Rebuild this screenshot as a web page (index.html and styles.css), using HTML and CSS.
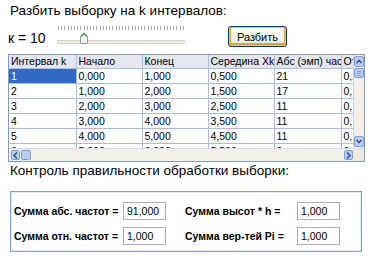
FILE: index.html
```html
<!DOCTYPE html>
<html lang="ru">
<head>
    <meta charset="UTF-8">
    <title>Интервалы</title>
    <link rel="stylesheet" href="styles.css">
</head>
<body>

    <div class="page">
        <h1 class="caption">Разбить выборку на k интервалов:</h1>

        <div class="split-row">
            <span class="k-label">к = 10</span>
            <div class="slider">
                <div class="ticks"></div>
                <div class="track"></div>
                <div class="thumb">
                    <svg width="8" height="12" viewBox="0 0 8 12">
                        <path d="M0.5 11.5 V4.5 L4 0.8 L7.5 4.5 V11.5 Z" fill="#f4f3ee" stroke="#9a9a9a"/>
                        <path d="M1.2 4.6 L4 1.6 L6.8 4.6" fill="none" stroke="#21a121" stroke-width="1.2"/>
                    </svg>
                </div>
            </div>
            <button class="xp-button">Разбить</button>
        </div>

        <div class="grid">
            <div class="grid-body">
                <div class="cells-wrap">
                    <table class="cells">
                        <colgroup>
                            <col class="c-wide"><col class="c-std"><col class="c-std"><col class="c-std"><col class="c-wide"><col class="c-cut">
                        </colgroup>
                        <tr class="head">
                            <th>Интервал k</th><th>Начало</th><th>Конец</th><th>Середина Xk</th><th>Абс (эмп) частота</th><th>От</th>
                        </tr>
                        <tr><td class="selected">1</td><td>0,000</td><td>1,000</td><td>0,500</td><td>21</td><td>0,2</td></tr>
                        <tr><td>2</td><td>1,000</td><td>2,000</td><td>1,500</td><td>17</td><td>0,1</td></tr>
                        <tr><td>3</td><td>2,000</td><td>3,000</td><td>2,500</td><td>11</td><td>0,1</td></tr>
                        <tr><td>4</td><td>3,000</td><td>4,000</td><td>3,500</td><td>11</td><td>0,1</td></tr>
                        <tr><td>5</td><td>4,000</td><td>5,000</td><td>4,500</td><td>11</td><td>0,1</td></tr>
                        <tr><td>6</td><td>5,000</td><td>6,000</td><td>5,500</td><td>9</td><td>0,0</td></tr>
                    </table>
                </div>
                <svg class="vbar" width="11" height="93" viewBox="0 0 11 93">
                    <rect x="0" y="0" width="11" height="93" fill="#f2f0e8"/>
                    <rect x="0" y="0" width="1" height="93" fill="#c4d2ee"/>
                    <rect x="1.5" y="1.5" width="9" height="10" rx="1.5" fill="#b9cdf8" stroke="#7f9ce0"/>
                    <path d="M3.5 8 L6 5.5 L8.5 8" fill="none" stroke="#2f4a80" stroke-width="1.5"/>
                    <rect x="1.5" y="13.5" width="9" height="9" rx="1.5" fill="#b9cdf8" stroke="#7f9ce0"/>
                    <path d="M4 16.5 H8 M4 18.5 H8 M4 20.5 H8" stroke="#7f9ce0"/>
                    <rect x="1.5" y="81.5" width="9" height="10" rx="1.5" fill="#b9cdf8" stroke="#7f9ce0"/>
                    <path d="M3.5 85 L6 87.5 L8.5 85" fill="none" stroke="#2f4a80" stroke-width="1.5"/>
                </svg>
            </div>
            <div class="grid-foot">
                <div class="hscroll">
                    <div class="sb-btn">
                        <svg width="5" height="7" viewBox="0 0 5 7"><path d="M4 0.5 L1 3.5 L4 6.5" fill="none" stroke="#2f4a80" stroke-width="1.5"/></svg>
                    </div>
                    <div class="sb-thumb"></div>
                    <div class="sb-fill"></div>
                    <div class="sb-btn">
                        <svg width="5" height="7" viewBox="0 0 5 7"><path d="M1 0.5 L4 3.5 L1 6.5" fill="none" stroke="#2f4a80" stroke-width="1.5"/></svg>
                    </div>
                </div>
                <div class="corner"></div>
            </div>
        </div>

        <h2 class="caption">Контроль правильности обработки выборки:</h2>

        <div class="check-box">
            <div class="check-grid">
                <span class="check-label">Сумма абс. частот =</span>
                <span class="field">91,000</span>
                <span></span>
                <span class="check-label">Сумма высот * h =</span>
                <span class="field">1,000</span>

                <span class="check-label">Сумма отн. частот =</span>
                <span class="field">1,000</span>
                <span></span>
                <span class="check-label">Сумма вер-тей Pi =</span>
                <span class="field">1,000</span>
            </div>
        </div>
    </div>

</body>
</html>
```

FILE: styles.css
```css
/* General Styles */
* {
    margin: 0;
    padding: 0;
    box-sizing: border-box;
}

body {
    font-family: "Liberation Sans", Arial, sans-serif;
    background-color: #ffffff;
    color: #000000;
}

.page {
    width: 370px;
    height: 266px;
    padding-top: 2px;
    overflow: hidden;
}

.caption {
    font-size: 13.5px;
    font-weight: normal;
    line-height: 18px;
    padding-left: 10px;
}

/* Split row */
.split-row {
    display: flex;
    align-items: flex-start;
    height: 21px;
    margin-top: 6px;
    padding-left: 8px;
}

.k-label {
    font-size: 14px;
    line-height: 18px;
    width: 49px;
    margin-top: 3px;
}

.slider {
    position: relative;
    width: 128px;
    height: 20px;
}

.ticks {
    height: 4px;
    margin-left: 1px;
    background: repeating-linear-gradient(to right, #a8a8a8 0 1px, transparent 1px 3.2px);
}

.track {
    height: 4px;
    margin-top: 10px;
    background: linear-gradient(#e6e3d6, #f3f2ec);
    border: 1px solid #d6d3c6;
    border-radius: 1px;
}

.thumb {
    position: absolute;
    left: 23px;
    top: 6px;
    line-height: 0;
}

.xp-button {
    margin-left: 43px;
    width: 59px;
    height: 21px;
    font-family: "Liberation Sans", Arial, sans-serif;
    font-size: 11px;
    color: #000;
    background: linear-gradient(#fefefd, #f0efe8 80%, #d8d5c8);
    border: 1px solid #003c74;
    border-radius: 3px;
    box-shadow: inset 0 0 0 1px #f5c15a, inset 0 -1px 0 2px #e5a12f;
}

/* Data grid */
.grid {
    margin-top: 7px;
    margin-left: 8px;
    width: 357px;
    height: 108px;
    border: 1px solid #7f9db9;
    overflow: hidden;
}

.grid-body {
    display: flex;
    height: 93px;
}

.cells-wrap {
    width: 344px;
    flex: none;
    overflow: hidden;
}

.vbar {
    display: block;
    flex: none;
}

.cells {
    border-collapse: collapse;
    table-layout: fixed;
    width: 344px;
    font-size: 10.5px;
    line-height: 14px;
}

.c-std {
    width: 66px;
}

.c-wide {
    width: 67px;
}

.c-cut {
    width: 12px;
}

.cells th, .cells td {
    height: 15px;
    padding: 0 0 0 2px;
    text-align: left;
    font-weight: normal;
    white-space: nowrap;
    overflow: hidden;
    border: 1px solid #a7bde8;
    border-top: none;
}

.cells th:first-child, .cells td:first-child {
    border-left: none;
}

.cells th:last-child, .cells td:last-child {
    border-right: none;
}

.cells .head th {
    height: 13px;
    line-height: 12px;
    background-color: #e3e7f0;
    background-image: radial-gradient(#cdd5e6 0.6px, transparent 0.7px);
    background-size: 2px 2px;
}

.cells td.selected {
    background-color: #316ac5;
    color: #ffffff;
}

.grid-foot {
    display: flex;
    height: 13px;
    border-top: 1px solid #d4dcec;
}

.hscroll {
    flex: 1;
    display: flex;
    align-items: center;
    background: #f2f0e8;
    padding-left: 2px;
}

.corner {
    width: 11px;
    background: #ebe8dc;
}

.sb-btn {
    width: 9px;
    height: 10px;
    flex: none;
    display: flex;
    align-items: center;
    justify-content: center;
    background-color: #b9cdf8;
    border: 1px solid #7f9ce0;
    border-radius: 2px;
}

.sb-thumb {
    width: 10px;
    height: 10px;
    margin-left: 1px;
    border: 1px solid #7f9ce0;
    border-radius: 2px;
    background-color: #b9cdf8;
}

.sb-fill {
    flex: 1;
}

/* Check box */
.check-box {
    margin-top: 11px;
    margin-left: 10px;
    width: 352px;
    height: 61px;
    border: 1px solid #7c9fd3;
    box-shadow: inset 0 0 0 1px #e4ecf9;
    padding: 10px 0 0 3px;
}

.check-grid {
    display: grid;
    grid-template-columns: 109px 43px 19px 112px 43px;
    grid-auto-rows: 18px;
    row-gap: 7px;
    align-items: center;
}

.check-label {
    font-size: 10.5px;
    font-weight: bold;
    white-space: nowrap;
}

.field {
    height: 18px;
    border: 1px solid #a9acb0;
    font-size: 10.5px;
    line-height: 16px;
    padding-left: 3px;
    background: #fff;
}
```
